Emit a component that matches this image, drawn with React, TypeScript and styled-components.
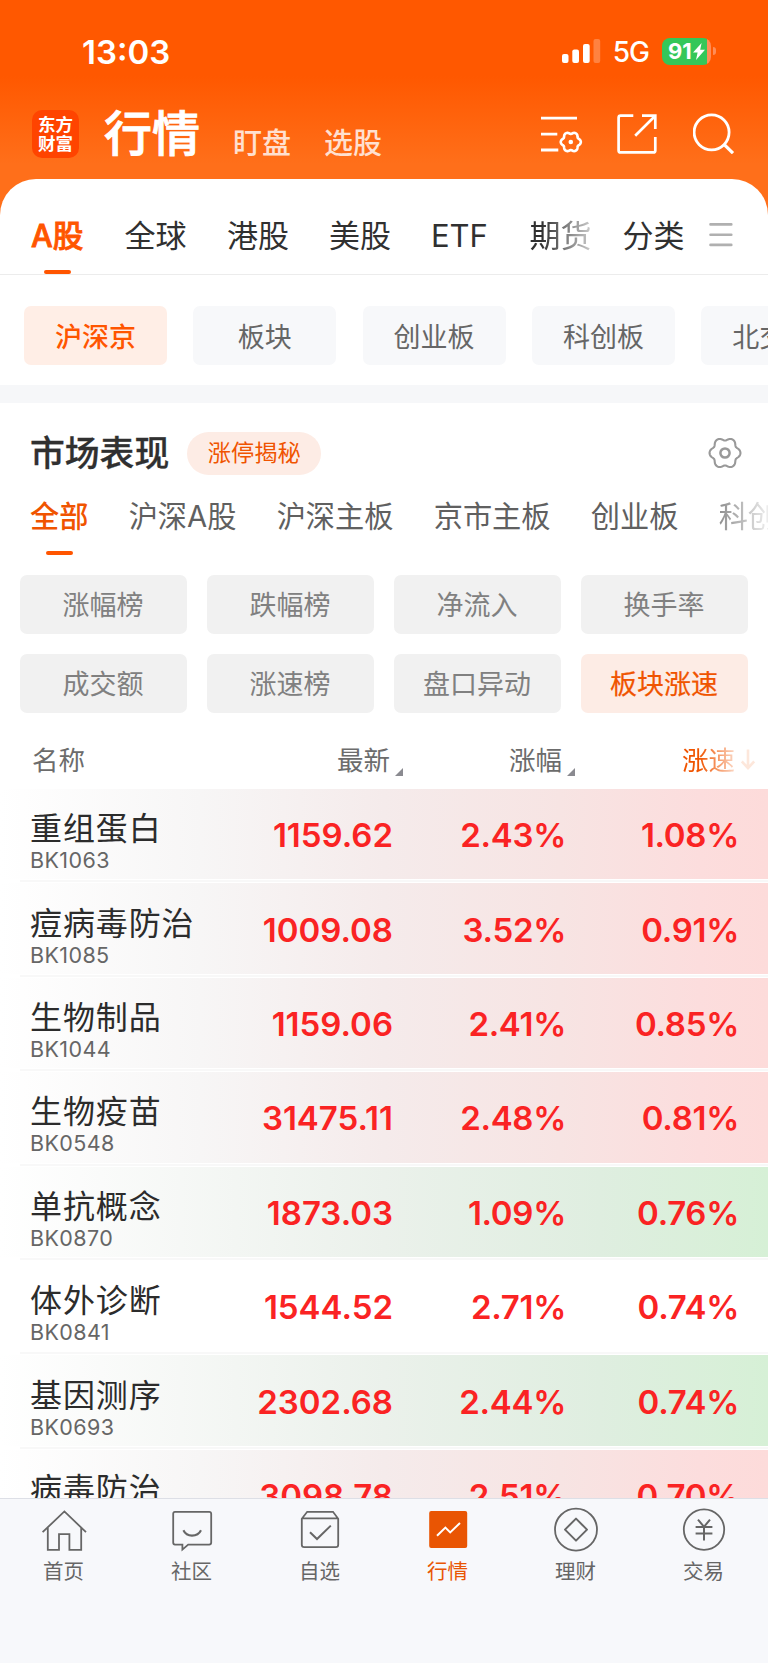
import React from "react";
import styled, { createGlobalStyle, css } from "styled-components";

const GlobalStyle = createGlobalStyle`
  *, *::before, *::after { box-sizing: border-box; }
  html, body { margin: 0; padding: 0; }
  body {
    background: #fff;
    font-family: Inter, "Noto Sans CJK SC", sans-serif;
    color: #303030;
  }
`;

const Screen = styled.div`
  width: 768px;
  height: 1663px;
  overflow: hidden;
  display: flex;
  flex-direction: column;
  background: linear-gradient(180deg, #ff5800 0, #ff5800 76px, #ff6f1a 164px);
`;

const StatusBar = styled.div`
  height: 102px;
  flex: none;
  display: flex;
  align-items: center;
  padding: 0 52px 0 82px;
  color: #fff;
`;

const Clock = styled.div`
  flex: 1;
  font-size: 33px;
  font-weight: 600;
  line-height: 40px;
  padding-top: 2px;
`;

const Network = styled.div`
  font-size: 28px;
  font-weight: 500;
  line-height: 34px;
  padding-top: 2px;
  margin: 0 13px 0 12px;
  letter-spacing: -1px;
`;

const Battery = styled.div`
  width: 49px;
  height: 27px;
  border-radius: 8px;
  background: linear-gradient(90deg, #34c759 45px, #ff8d57 45px);
  display: flex;
  align-items: center;
  padding-left: 6px;
  font-size: 22px;
  font-weight: 700;
  line-height: 27px;

  svg {
    flex: none;
    margin-left: 1px;
  }
`;

const BatteryTip = styled.div`
  width: 3px;
  height: 8px;
  margin-left: 2px;
  border-radius: 0 4px 4px 0;
  background: #ff8d57;
`;

const Header = styled.div`
  height: 77px;
  flex: none;
  display: flex;
  align-items: flex-start;
  padding: 0 33px 0 32px;
  color: #fff;
`;

const Logo = styled.div`
  width: 47px;
  height: 48px;
  margin-top: 8px;
  border-radius: 10px;
  background: #ff4400;
  display: flex;
  flex-direction: column;
  align-items: center;
  justify-content: center;
  font-size: 17.5px;
  font-weight: 700;
  line-height: 19px;
`;

const Heading = styled.div`
  margin: 1px 0 0 25px;
  font-size: 48px;
  font-weight: 500;
  line-height: 62px;
  -webkit-text-stroke: 0.9px #fff;
`;

const HeaderLink = styled.div`
  margin: 22px 0 0 33px;
  font-size: 29px;
  font-weight: 500;
  line-height: 40px;
  color: #ffe0d0;
`;

const HeaderIcons = styled.div`
  margin-left: auto;
  display: flex;
  gap: 34px;
  padding-top: 10px;
`;

const Sheet = styled.div`
  flex: 1;
  min-height: 0;
  display: flex;
  flex-direction: column;
  background: #fff;
  border-radius: 36px 36px 0 0;
  overflow: hidden;
`;

const MarketTabs = styled.div`
  height: 96px;
  flex: none;
  display: flex;
  align-items: stretch;
  padding: 0 36px 0 31px;
  border-bottom: 1px solid #ececec;
`;

const fade = css`
  -webkit-mask-image: linear-gradient(90deg, #000 20%, rgba(0, 0, 0, 0.25) 100%);
  mask-image: linear-gradient(90deg, #000 20%, rgba(0, 0, 0, 0.25) 100%);
`;

const MarketTab = styled.div<{ $active?: boolean; $fade?: boolean; $gap?: number }>`
  display: flex;
  flex-direction: column;
  align-items: center;
  flex: none;
  margin-left: ${(p) => p.$gap ?? 0}px;
  padding-top: 35px;
  font-size: ${(p) => (p.$active ? 30.7 : 31)}px;
  line-height: 44px;
  white-space: nowrap;
  color: ${(p) => (p.$active ? "#ff5500" : "#303030")};
  font-weight: ${(p) => (p.$active ? 500 : 400)};
  -webkit-text-stroke: ${(p) => (p.$active ? "0.8px #ff5500" : "0")};
  ${(p) => p.$fade && fade}
`;

const Underline = styled.div<{ $top: number }>`
  width: 27px;
  height: 4px;
  flex: none;
  margin-top: ${(p) => p.$top}px;
  border-radius: 2px;
  background: #ff5500;
`;

const MenuIcon = styled.div`
  margin: 43px -1px 0 auto;
`;

const Pills = styled.div`
  display: flex;
  flex: none;
  gap: 26.3px;
  padding: 31px 0 20px 24px;
  overflow: hidden;
`;

const Pill = styled.div<{ $active?: boolean }>`
  flex: none;
  width: 143px;
  height: 59px;
  border-radius: 7px;
  text-align: center;
  font-size: 27px;
  line-height: 63px;
  background: ${(p) => (p.$active ? "#ffeee6" : "#f7f8fa")};
  color: ${(p) => (p.$active ? "#ff5500" : "#666")};
  font-weight: ${(p) => (p.$active ? 500 : 400)};
`;

const Band = styled.div`
  height: 18px;
  flex: none;
  background: #f6f7f9;
`;

const SectionHead = styled.div`
  height: 93px;
  flex: none;
  display: flex;
  align-items: center;
  padding: 7px 26px 0 30px;
`;

const SectionTitle = styled.div`
  font-size: 34.8px;
  font-weight: 500;
  line-height: 50px;
  -webkit-text-stroke: 0.3px #303030;
`;

const Tag = styled.div`
  width: 134px;
  height: 43px;
  margin-left: 18px;
  border-radius: 22px;
  background: #fdece5;
  color: #f05400;
  font-size: 23.2px;
  line-height: 43px;
  text-align: center;
`;

const SectionGear = styled.div`
  margin-left: auto;
  height: 34px;
`;

const BoardTabs = styled.div`
  height: 79px;
  flex: none;
  display: flex;
  padding-left: 30px;
  gap: 40.3px;
  overflow: hidden;
`;

const BoardTab = styled.div<{ $active?: boolean; $fade?: boolean }>`
  display: flex;
  flex-direction: column;
  align-items: center;
  flex: none;
  padding-top: 1px;
  font-size: 29.2px;
  line-height: 40px;
  white-space: nowrap;
  color: ${(p) => (p.$active ? "#f05400" : "#606060")};
  font-weight: ${(p) => (p.$active ? 500 : 400)};
  ${(p) =>
    p.$fade &&
    css`
      -webkit-mask-image: linear-gradient(90deg, rgba(0, 0, 0, 0.7), rgba(0, 0, 0, 0.12) 48px);
      mask-image: linear-gradient(90deg, rgba(0, 0, 0, 0.7), rgba(0, 0, 0, 0.12) 48px);
    `}
`;

const RankGrid = styled.div`
  flex: none;
  display: grid;
  grid-template-columns: repeat(4, 167px);
  gap: 20px;
  padding: 0 20px;
`;

const RankButton = styled.div<{ $active?: boolean }>`
  height: 59px;
  border-radius: 7px;
  padding-right: 1px;
  text-align: center;
  font-size: 27px;
  line-height: 61px;
  background: ${(p) => (p.$active ? "#fdece5" : "#f1f1f1")};
  color: ${(p) => (p.$active ? "#f05400" : "#808080")};
  -webkit-text-stroke: ${(p) => (p.$active ? "0.2px #f05400" : "0")};
`;

const TableHead = styled.div`
  height: 76px;
  flex: none;
  display: flex;
  align-items: center;
  padding: 18px 0 0 32px;
  font-size: 26.5px;
  line-height: 40px;
  color: #6c6c6c;
`;

const HeadCell = styled.div<{ $width: number; $sorted?: boolean }>`
  width: ${(p) => p.$width}px;
  flex: none;
  display: flex;
  align-items: center;
  justify-content: ${(p) => (p.$width > 250 ? "flex-start" : "flex-end")};
  color: ${(p) => (p.$sorted ? "#f05400" : "inherit")};
  ${(p) =>
    p.$sorted &&
    css`
      -webkit-mask-image: linear-gradient(90deg, #000 124px, rgba(0, 0, 0, 0.14) 164px);
      mask-image: linear-gradient(90deg, #000 124px, rgba(0, 0, 0, 0.14) 164px);
    `}
`;

const Corner = styled.svg`
  margin: 24px 0 0 5px;
`;

const Table = styled.div`
  flex: 1;
  min-height: 0;
  overflow: hidden;
`;

const tones = {
  up: "linear-gradient(90deg, #fff 0, #f7f6f6 200px, #f5ebeb 384px, #f7e4e3 560px, #fcdddd 700px, #fddbda 768px)",
  down: "linear-gradient(90deg, #fff 0, #f6f8f6 180px, #ebf1eb 384px, #dfeee0 600px, #d6f0d6 768px)",
  flat: "#fff",
};

const Row = styled.div<{ $tone: keyof typeof tones }>`
  height: 90.4px;
  display: flex;
  align-items: center;
  background: ${(p) => tones[p.$tone]};
`;

const RowLine = styled.div`
  height: 4px;
  padding: 1px 0 1px 20px;

  &::before {
    content: "";
    display: block;
    height: 2px;
    background: #f8f8f8;
  }
`;

const NameCell = styled.div`
  width: 220px;
  height: 90px;
  padding: 18px 0 0 30px;
`;

const StockName = styled.div`
  font-size: 32px;
  line-height: 44px;
  letter-spacing: 0.9px;
  white-space: nowrap;
  color: #2c2c2c;
`;

const StockCode = styled.div`
  font-size: 21.5px;
  line-height: 26px;
  margin-top: -4px;
  letter-spacing: 0.4px;
  color: #666;
`;

const Value = styled.div<{ $width: number; $percent?: boolean }>`
  width: ${(p) => p.$width}px;
  text-align: right;
  font-size: 33px;
  font-weight: 600;
  line-height: 40px;
  padding-top: 2px;
  letter-spacing: ${(p) => (p.$percent ? "-0.3px" : "0")};
  color: #fa2323;
`;

const TabBar = styled.div`
  height: 165px;
  flex: none;
  display: grid;
  grid-template-columns: repeat(6, 128px);
  border-top: 1px solid #dddfe6;
  background: #f7f8fb;
`;

const TabItem = styled.div<{ $active?: boolean }>`
  display: flex;
  flex-direction: column;
  align-items: center;
  padding: 8px 1px 0 0;
  font-size: 20.5px;
  line-height: 30px;
  color: ${(p) => (p.$active ? "#e95503" : "#666")};

  svg {
    display: block;
    margin-bottom: 4px;
  }
`;

/* Six-lobed gear outline, one lobe every 60 degrees, centred on the origin. */
const gearPath =
  Array.from({ length: 120 }, (_, i) => {
    const a = (i / 120) * Math.PI * 2;
    const r = 14.1 + 1.5 * Math.cos(6 * a) - 0.15 * Math.cos(12 * a);
    return `${i ? "L" : "M"}${(r * Math.cos(a)).toFixed(2)} ${(r * Math.sin(a)).toFixed(2)}`;
  }).join(" ") + " Z";

const SignalIcon = () => (
  <svg width="39" height="24" viewBox="0 0 39 24" fill="#fff">
    <rect x="0" y="15" width="6.5" height="9" rx="2" />
    <rect x="10.3" y="10.5" width="6.7" height="13.5" rx="2" />
    <rect x="21" y="5" width="6.7" height="19" rx="2" />
    <rect x="31.5" y="0" width="6.7" height="24" rx="2" opacity="0.25" />
  </svg>
);

const BoltIcon = () => (
  <svg width="12" height="17" viewBox="0 0 12 17" fill="#fff">
    <path d="M8.6 0 L0 9.6 H4.6 L3 17 L12 6.8 H7.2 Z" />
  </svg>
);

const ListGearIcon = () => (
  <svg width="42" height="42" viewBox="0 0 42 42" fill="none" stroke="#fff" strokeWidth="2.8">
    <path d="M0 6.2 H36 M0 22.2 H16.3 M0 38 H17.3" />
    <g transform="translate(29.8 30)">
      <path d={gearPath} transform="scale(0.65)" strokeWidth="4" strokeLinejoin="round" />
      <circle r="2.3" fill="#fff" stroke="none" />
    </g>
  </svg>
);

const ShareIcon = () => (
  <svg width="42" height="42" viewBox="0 0 42 42" fill="none" stroke="#fff" strokeWidth="2.7">
    <path d="M16.3 3.7 H3.6 Q1.6 3.7 1.6 5.7 V38.4 Q1.6 40.4 3.6 40.4 H36.3 Q38.3 40.4 38.3 38.4 V25" />
    <path d="M25 3.7 H38.3 V17 M38.3 3.7 L18.2 23.8" />
  </svg>
);

const SearchIcon = () => (
  <svg width="42" height="42" viewBox="0 0 42 42" fill="none" stroke="#fff" strokeWidth="2.8">
    <circle cx="18.6" cy="20.3" r="17.5" />
    <path d="M31 32.4 L40 41.2" strokeWidth="3.2" />
  </svg>
);

const HamburgerIcon = () => (
  <svg width="24" height="26" viewBox="0 0 24 26" stroke="#b0b0b0" strokeWidth="2.6" strokeLinecap="round">
    <path d="M1.5 2.4 H22.3 M1.5 12.7 H22.3 M1.5 22.9 H22.3" />
  </svg>
);

const GearIcon = () => (
  <svg width="34" height="34" viewBox="-17 -17 34 34" fill="none" stroke="#999" strokeWidth="2.1">
    <path d={gearPath} strokeLinejoin="round" />
    <circle r="4.6" strokeWidth="2.5" />
  </svg>
);

const CornerMark = () => (
  <Corner width="8" height="8" viewBox="0 0 8 8">
    <path d="M8 0 V8 H0 Z" fill="#8a8a90" />
  </Corner>
);

const ArrowSvg = styled.svg`
  margin-left: 6px;
`;

const SortArrow = () => (
  <ArrowSvg width="14" height="22" viewBox="0 0 14 22" fill="none" stroke="#f05400" strokeWidth="2.6">
    <path d="M7 0.5 V19 M0.8 12.5 L7 19 L13.2 12.5" />
  </ArrowSvg>
);

const IconFrame = ({ children }: { children: React.ReactNode }) => (
  <svg width="46" height="46" viewBox="0 0 46 46" fill="none" stroke="#666" strokeWidth="1.8">
    {children}
  </svg>
);

const HomeIcon = () => (
  <IconFrame>
    <path d="M1.6 25.2 L23.4 4.4 L45 25.2 M6.8 20.6 V42.8 H18 V27.2 H28.4 V42.8 H40.2 V20.6" />
  </IconFrame>
);

const ChatIcon = () => (
  <IconFrame>
    <path d="M6 4.8 H40.2 Q42.2 4.8 42.2 6.8 V35.6 Q42.2 37.6 40.2 37.6 H19.2 L13.4 42.6 V37.6 H6 Q4.2 37.6 4.2 35.6 V6.8 Q4.2 4.8 6 4.8 Z" />
    <path d="M14.4 23.2 Q17 28.6 23 28.6 Q29.4 28.6 32 23.2" strokeWidth="2.1" />
  </IconFrame>
);

const PickIcon = () => (
  <IconFrame>
    <path d="M4.8 11.8 L10.2 4.8 H36 L41.2 11.8 V37.8 Q41.2 40.2 38.8 40.2 H7.2 Q4.8 40.2 4.8 37.8 Z M4.8 11.4 H41.2" />
    <path d="M13 25.2 L20 32 L33.8 18.6" strokeWidth="2" />
  </IconFrame>
);

const MarketIcon = () => (
  <IconFrame>
    <rect x="4.2" y="4" width="38" height="37" rx="2" fill="#e95503" stroke="none" />
    <path d="M12 28.8 L20.4 20.6 L25.2 25.4 L35 16" stroke="#fff" strokeWidth="2" />
  </IconFrame>
);

const WealthIcon = () => (
  <IconFrame>
    <circle cx="23" cy="22.6" r="21" />
    <path d="M23 11.6 L34 22.6 L23 33.6 L12 22.6 Z" strokeLinejoin="round" strokeWidth="2" />
  </IconFrame>
);

const TradeIcon = () => (
  <IconFrame>
    <circle cx="23" cy="22.6" r="20.2" />
    <path d="M17 12.6 L23 19.8 L29 12.6 M23 19.8 V33.4 M14.6 20 H31.4 M14.6 26.4 H31.4" strokeWidth="2" />
  </IconFrame>
);

const marketTabs = [
  { label: "A股", active: true },
  { label: "全球", gap: 41 },
  { label: "港股", gap: 40.5 },
  { label: "美股", gap: 40 },
  { label: "ETF", gap: 40 },
  { label: "期货", gap: 41.5, fade: true },
  { label: "分类", gap: 31 },
];
const pills = ["沪深京", "板块", "创业板", "科创板", "北交所"];
const boards = ["全部", "沪深A股", "沪深主板", "京市主板", "创业板", "科创板"];
const ranks = ["涨幅榜", "跌幅榜", "净流入", "换手率", "成交额", "涨速榜", "盘口异动", "板块涨速"];

const stocks: { name: string; code: string; last: string; change: string; speed: string; tone: keyof typeof tones }[] = [
  { name: "重组蛋白", code: "BK1063", last: "1159.62", change: "2.43%", speed: "1.08%", tone: "up" },
  { name: "痘病毒防治", code: "BK1085", last: "1009.08", change: "3.52%", speed: "0.91%", tone: "up" },
  { name: "生物制品", code: "BK1044", last: "1159.06", change: "2.41%", speed: "0.85%", tone: "up" },
  { name: "生物疫苗", code: "BK0548", last: "31475.11", change: "2.48%", speed: "0.81%", tone: "up" },
  { name: "单抗概念", code: "BK0870", last: "1873.03", change: "1.09%", speed: "0.76%", tone: "down" },
  { name: "体外诊断", code: "BK0841", last: "1544.52", change: "2.71%", speed: "0.74%", tone: "flat" },
  { name: "基因测序", code: "BK0693", last: "2302.68", change: "2.44%", speed: "0.74%", tone: "down" },
  { name: "病毒防治", code: "BK0675", last: "3098.78", change: "2.51%", speed: "0.70%", tone: "up" },
];

const navItems = [
  { label: "首页", Icon: HomeIcon },
  { label: "社区", Icon: ChatIcon },
  { label: "自选", Icon: PickIcon },
  { label: "行情", Icon: MarketIcon, active: true },
  { label: "理财", Icon: WealthIcon },
  { label: "交易", Icon: TradeIcon },
];

export default function App() {
  return (
    <Screen>
      <GlobalStyle />
      <StatusBar>
        <Clock>13:03</Clock>
        <SignalIcon />
        <Network>5G</Network>
        <Battery>
          91
          <BoltIcon />
        </Battery>
        <BatteryTip />
      </StatusBar>
      <Header>
        <Logo>
          <span>东方</span>
          <span>财富</span>
        </Logo>
        <Heading>行情</Heading>
        <HeaderLink>盯盘</HeaderLink>
        <HeaderLink>选股</HeaderLink>
        <HeaderIcons>
          <ListGearIcon />
          <ShareIcon />
          <SearchIcon />
        </HeaderIcons>
      </Header>
      <Sheet>
        <MarketTabs>
          {marketTabs.map((t) => (
            <MarketTab key={t.label} $active={t.active} $fade={t.fade} $gap={t.gap}>
              {t.label}
              {t.active && <Underline $top={12} />}
            </MarketTab>
          ))}
          <MenuIcon>
            <HamburgerIcon />
          </MenuIcon>
        </MarketTabs>
        <Pills>
          {pills.map((p, i) => (
            <Pill key={p} $active={i === 0}>
              {p}
            </Pill>
          ))}
        </Pills>
        <Band />
        <SectionHead>
          <SectionTitle>市场表现</SectionTitle>
          <Tag>涨停揭秘</Tag>
          <SectionGear>
            <GearIcon />
          </SectionGear>
        </SectionHead>
        <BoardTabs>
          {boards.map((b, i) => (
            <BoardTab key={b} $active={i === 0} $fade={i === boards.length - 1}>
              {b}
              {i === 0 && <Underline $top={14} />}
            </BoardTab>
          ))}
        </BoardTabs>
        <RankGrid>
          {ranks.map((r, i) => (
            <RankButton key={r} $active={i === ranks.length - 1}>
              {r}
            </RankButton>
          ))}
        </RankGrid>
        <TableHead>
          <HeadCell $width={260}>名称</HeadCell>
          <HeadCell $width={111}>
            最新
            <CornerMark />
          </HeadCell>
          <HeadCell $width={172}>
            涨幅
            <CornerMark />
          </HeadCell>
          <HeadCell $width={180} $sorted>
            涨速
            <SortArrow />
          </HeadCell>
        </TableHead>
        <Table>
          {stocks.map((s) => (
            <React.Fragment key={s.code}>
              <Row $tone={s.tone}>
                <NameCell>
                  <StockName>{s.name}</StockName>
                  <StockCode>{s.code}</StockCode>
                </NameCell>
                <Value $width={173}>{s.last}</Value>
                <Value $width={173} $percent>
                  {s.change}
                </Value>
                <Value $width={173} $percent>
                  {s.speed}
                </Value>
              </Row>
              <RowLine />
            </React.Fragment>
          ))}
        </Table>
      </Sheet>
      <TabBar>
        {navItems.map(({ label, Icon, active }) => (
          <TabItem key={label} $active={active}>
            <Icon />
            {label}
          </TabItem>
        ))}
      </TabBar>
    </Screen>
  );
}
